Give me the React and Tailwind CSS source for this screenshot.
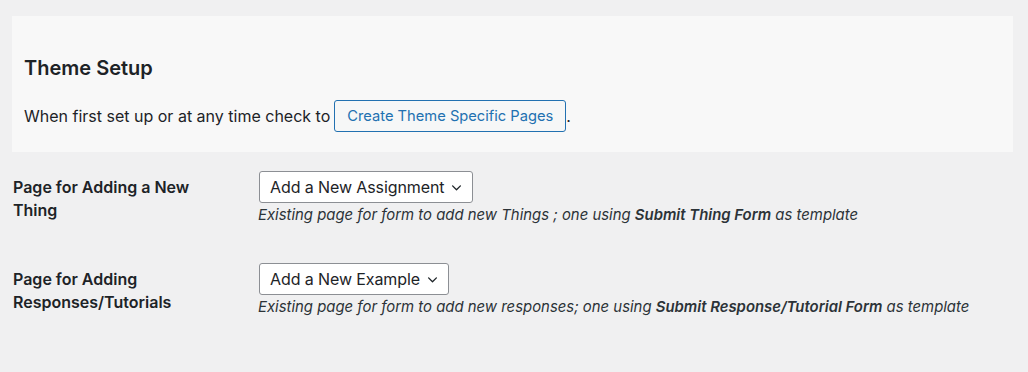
const Chevron = () => (
  <svg width="13" height="13" viewBox="0 0 20 20" fill="none" stroke="currentColor" strokeWidth="2" strokeLinecap="round" strokeLinejoin="round">
    <path d="M4 7.5l6 6 6-6" />
  </svg>
);

const rows = [
  {
    label: ['Page for Adding a New', 'Thing'],
    value: 'Add a New Assignment',
    before: 'Existing page for form to add new Things ; one using ',
    strong: 'Submit Thing Form',
  },
  {
    label: ['Page for Adding', 'Responses/Tutorials'],
    value: 'Add a New Example',
    before: 'Existing page for form to add new responses; one using ',
    strong: 'Submit Response/Tutorial Form',
  },
];

export default function App() {
  return (
    <div className="h-[372px] w-[1028px] bg-[#f0f0f1] pt-4 text-[#1d2327]" style={{ fontFamily: 'Inter, "Noto Sans", sans-serif' }}>
      <div className="ml-3 mr-[15px] h-[136px] bg-[#f8f8f8] px-3 pt-[39px]">
        <h2 className="text-[20px] font-semibold leading-[26px]">Theme Setup</h2>
        <div className="mt-[19px] flex items-center text-[16px]">
          <span>When first set up or at any time check to</span>
          <button className="ml-[4px] h-8 rounded-[3px] border border-[#2271b1] bg-[#f6f7f7] px-3 text-[14.7px] text-[#2271b1]">
            Create Theme Specific Pages
          </button>
          <span>.</span>
        </div>
      </div>
      <div className="pl-[13px] pt-[19px]">
        {rows.map((row, i) => (
          <div key={i} className={`flex ${i > 0 ? 'mt-[38px]' : ''}`}>
            <div className="w-[246px] pt-[5px] text-[16px] font-semibold leading-[23px]">
              {row.label[0]}
              <br />
              {row.label[1]}
            </div>
            <div>
              <div className="inline-flex h-8 items-center gap-[6px] rounded-[3px] border border-[#8c8f94] bg-white pl-[10px] pr-[9px] text-[16px]">
                <span className="tracking-[-0.1px]">{row.value}</span>
                <Chevron />
              </div>
              <p className="-ml-px mt-[2px] text-[14.9px] italic leading-5 text-[#2c3338]">
                {row.before}
                <b className="font-semibold">{row.strong}</b> as template
              </p>
            </div>
          </div>
        ))}
      </div>
    </div>
  );
}
